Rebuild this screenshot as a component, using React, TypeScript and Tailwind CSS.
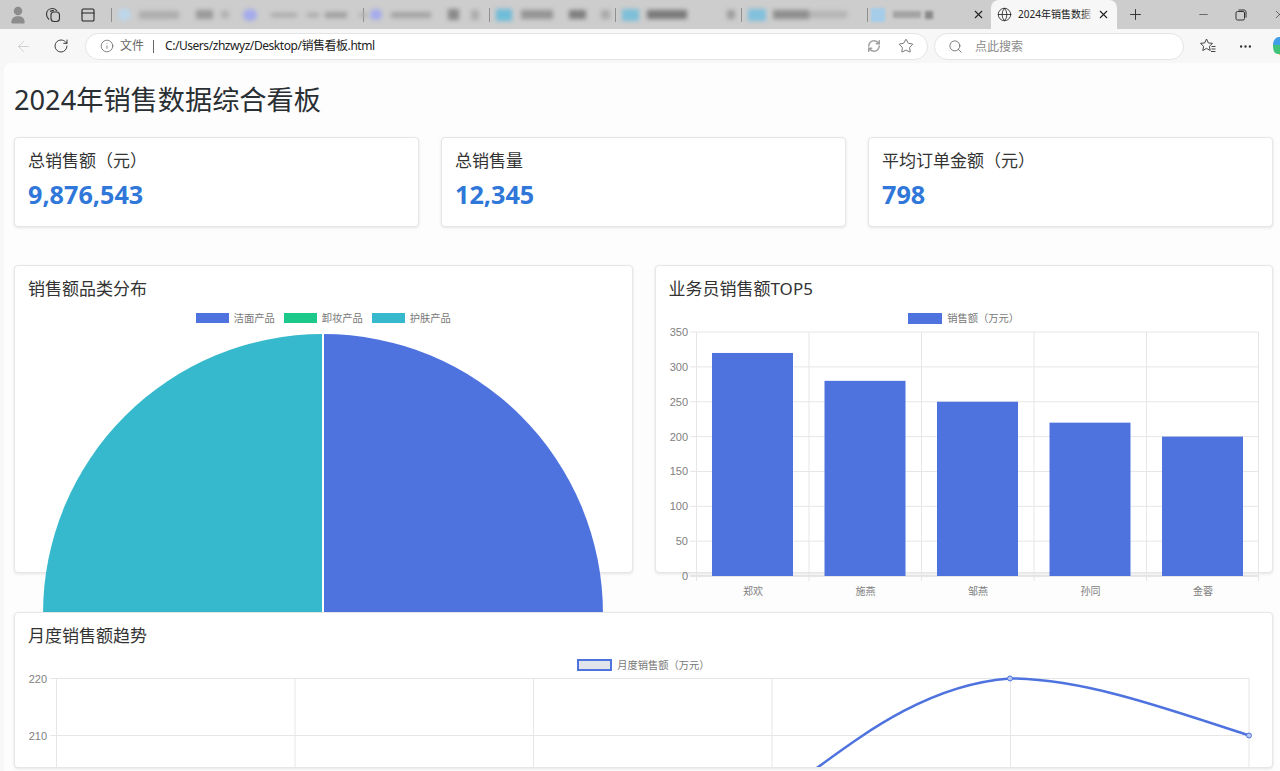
import { ArrowLeft, Globe, Info, Minus, MoreHorizontal, PanelTop, Plus, RefreshCw, RotateCw, Search, Star, X } from "lucide-react";

const tabs = [
  {
    fav: "w-[13px] h-[13px] rounded-full bg-[#bcd6ea]",
    blocks: ["ml-[8px] w-[40px] h-[8px] bg-[#aeaeae]", "ml-[17px] w-[17px] h-[9px] bg-[#9a9a9a]", "ml-[8px] w-[8px] h-[7px] bg-[#b0b0b0]"],
  },
  {
    fav: "w-[14px] h-[12px] rounded-full bg-[#a5abeb]",
    blocks: ["ml-[14px] w-[26px] h-[4px] bg-[#a8a8a8]", "ml-[10px] w-[12px] h-[4px] bg-[#a8a8a8]", "ml-[6px] w-[22px] h-[6px] bg-[#a0a0a0]", "ml-[12px] w-[8px] h-[4px] bg-[#b0b0b0]"],
  },
  {
    fav: "w-[12px] h-[11px] rounded-full bg-[#a5abeb]",
    blocks: ["ml-[9px] w-[40px] h-[6px] bg-[#a4a4a4]", "ml-[17px] w-[11px] h-[11px] bg-[#8a8a8a]", "ml-[12px] w-[8px] h-[10px] bg-[#adadad]"],
  },
  {
    fav: "w-[16px] h-[12px] bg-[#6fbcd8]",
    blocks: ["ml-[9px] w-[32px] h-[9px] bg-[#959595]", "ml-[16px] w-[17px] h-[9px] bg-[#7f7f7f]", "ml-[15px] w-[9px] h-[9px] bg-[#aaaaaa]"],
  },
  {
    fav: "w-[17px] h-[12px] bg-[#7dbfd8]",
    blocks: ["ml-[8px] w-[40px] h-[9px] bg-[#7a7a7a]", "ml-[40px] w-[8px] h-[9px] bg-[#9d9d9d]"],
  },
  {
    fav: "w-[18px] h-[12px] bg-[#80c0dc]",
    blocks: ["ml-[7px] w-[36px] h-[9px] bg-[#8e8e8e]", "w-[38px] h-[7px] bg-[#b4b4b4]"],
  },
];

const Favorites = () => (
  <svg width="18" height="18" viewBox="0 0 18 18" fill="none" stroke="#444" strokeWidth="1" strokeLinejoin="round">
    <path d="M7.500 2l1.800 3.900 4.200.5-3.100 2.900.8 4.200-3.700-2.100-3.700 2.100.8-4.200L1.500 6.400l4.200-.5z" />
    <path d="M12.500 9.500h4M12.500 12h4M12 14.500h4.500" />
  </svg>
);

const BrowserChrome = () => (
  <>
    <div className="flex h-[29px] items-stretch overflow-hidden bg-[#cdcdcd] text-[#333]">
      <div className="flex w-[36px] shrink-0 items-center justify-center">
        <svg width="16" height="19" viewBox="0 0 18 20" fill="#8c8c8c">
          <circle cx="9" cy="6" r="4.800" />
          <path d="M1.500 19c0-5 3-7 7.500-7s7.500 2 7.500 7c0 .6-.4 1-1 1h-13c-.6 0-1-.4-1-1z" />
        </svg>
      </div>
      <div className="flex w-[34px] shrink-0 items-center justify-center">
        <svg width="16" height="16" viewBox="0 0 16 16" fill="none" stroke="#333" strokeWidth="1.100">
          <rect x="6" y="5" width="8.500" height="9.500" rx="3" />
          <path d="M4 12.500C2.500 11 1.500 9.500 1.500 7.500 1.500 4 4 1.500 7.500 1.500c2 0 3.500 1 4.500 2.500" />
          <path d="M5 4.500C6 3.800 7.500 3.500 9 3.800" />
        </svg>
      </div>
      <div className="flex w-[36px] shrink-0 items-center justify-center">
        <PanelTop size={16} strokeWidth={1.600} className="text-[#222]" />
      </div>
      <div className="w-[5px] shrink-0" />
      {tabs.map((tab, i) => (
        <div key={i} className="flex w-[126px] shrink-0 items-center">
          <div className="h-[14px] w-px bg-[#8f8f8f]" />
          <div className="flex items-center pl-[6px] blur-[2px]">
            <div className={tab.fav} />
            {tab.blocks.map((b, j) => (
              <div key={j} className={b} />
            ))}
          </div>
        </div>
      ))}
      <div className="flex w-[124px] shrink-0 items-center">
        <div className="h-[14px] w-px bg-[#8f8f8f]" />
        <div className="ml-[3px] h-[14px] w-[14px] bg-[#a5cdea] blur-[1px]" />
        <div className="ml-[8px] h-[7px] w-[28px] bg-[#a3a3a3] blur-[1.500px]" />
        <div className="ml-[4px] h-[8px] w-[8px] bg-[#888] blur-[1.500px]" />
        <X size={13} strokeWidth={2} className="ml-[39px] text-[#222]" />
      </div>
      <div className="flex w-[126px] shrink-0 items-center rounded-t-lg bg-[#f7f7f7] pl-[6px]">
        <Globe size={15} strokeWidth={1.300} className="text-[#222]" />
        <div className="relative ml-[6px] w-[76px] whitespace-nowrap font-['Noto_Sans','Noto_Sans_CJK_SC',sans-serif] text-[10px] text-[#222]">
          2024年销售数据
          <div className="absolute inset-y-0 right-0 w-[12px] bg-gradient-to-r from-transparent to-[#f7f7f7]" />
        </div>
        <X size={13} strokeWidth={2} className="ml-[3px] text-[#222]" />
      </div>
      <div className="flex w-[36px] shrink-0 items-center justify-center">
        <Plus size={17} strokeWidth={1.400} className="text-[#333]" />
      </div>
      <div className="ml-[31px] flex w-[38px] shrink-0 items-center justify-center">
        <Minus size={13} strokeWidth={1.200} className="text-[#333]" />
      </div>
      <div className="flex w-[38px] shrink-0 items-center justify-center">
        <svg width="12" height="12" viewBox="0 0 12 12" fill="none" stroke="#333" strokeWidth="1">
          <rect x="1" y="2.500" width="8.500" height="8.500" rx="1.500" />
          <path d="M3.500 1h5.500c1.200 0 2 .8 2 2v5.500" />
        </svg>
      </div>
      <div className="flex w-[38px] shrink-0 items-center justify-center">
        <X size={13} strokeWidth={1.200} className="text-[#333]" />
      </div>
    </div>
    <div className="flex h-[34px] items-center bg-[#f7f7f7]">
      <div className="flex w-[46px] shrink-0 justify-center">
        <ArrowLeft size={17} strokeWidth={1.200} className="text-[#c9c9c9]" />
      </div>
      <div className="flex w-[30px] shrink-0 justify-center">
        <RotateCw size={16} strokeWidth={1.400} className="text-[#333]" />
      </div>
      <div className="ml-[9px] flex h-[27px] w-[843px] shrink-0 items-center rounded-full border border-[#e4e4e4] bg-white pl-[14px] font-['Noto_Sans','Noto_Sans_CJK_SC',sans-serif] text-[12px]">
        <Info size={14} strokeWidth={1.200} className="text-[#555]" />
        <span className="ml-[6px] text-[#666]">文件</span>
        <div className="ml-[9px] h-[13px] w-px bg-[#666]" />
        <span className="ml-[11px] tracking-[-0.45px] text-[#222]">C:/Users/zhzwyz/Desktop/销售看板.html</span>
        <div className="ml-auto mr-[13px] flex items-center gap-[17px]">
          <RefreshCw size={14} strokeWidth={2.600} className="text-[#a0a0a0]" />
          <Star size={16} strokeWidth={1.100} className="text-[#444]" />
        </div>
      </div>
      <div className="ml-[6px] flex h-[27px] w-[250px] shrink-0 items-center rounded-full border border-[#e4e4e4] bg-white pl-[13px] font-['Noto_Sans_CJK_SC',sans-serif] text-[12px] text-[#8a8a8a]">
        <Search size={15} strokeWidth={1.200} className="text-[#555]" />
        <span className="ml-[12px]">点此搜索</span>
      </div>
      <div className="ml-[15px] flex w-[18px] shrink-0 justify-center">
        <Favorites />
      </div>
      <div className="ml-[19px] flex w-[18px] shrink-0 justify-center">
        <MoreHorizontal size={15} strokeWidth={1.800} className="text-[#333]" />
      </div>
      <div className="ml-[17px] shrink-0">
        <svg width="18" height="20" viewBox="0 0 18 20">
          <path d="M2 9c0-5 3-8 6-8h6c3 0 4 4 3 8H2z" fill="#3f9fe8" />
          <path d="M2 9c0 5 1 9 5 9h3l3-5-3-4H2z" fill="#3fc27a" />
          <path d="M8 18c2 0 3-1 4-2l3-7h2c0 5-2 10-6 10H8z" fill="#f2b134" />
          <path d="M10 9h6l-3 6-3-3z" fill="#e4578c" />
        </svg>
      </div>
    </div>
  </>
);

const StatCard = ({ label, value }: { label: string; value: string }) => (
  <div className="h-[90px] rounded border border-[#e6e6e6] bg-white px-[13px] pt-[11px] shadow-[0_1px_3px_rgba(0,0,0,0.1)]">
    <div className="text-[17px] leading-[24px] text-[#333]">{label}</div>
    <div className="mt-[4px] text-[25.200px] font-bold leading-[34px] text-[#2f77d8]">{value}</div>
  </div>
);

const LegendItem = ({ swatch, label }: { swatch: string; label: string }) => (
  <div className="flex items-center gap-[5px]">
    <div className={swatch} />
    <span className="text-[10.250px] leading-[12px] text-[#777]">{label}</span>
  </div>
);

const PieChart = () => (
  <svg width="590" height="290" viewBox="28 326 590 290" className="shrink-0">
    <path d="M323 614 V334 A280 280 0 0 1 323 894 Z" fill="#4e73df" />
    <path d="M323 614 V894 A280 280 0 0 1 323 334 Z" fill="#36b9cc" />
    <line x1="323" x2="323" y1="334" y2="616" stroke="#fff" strokeWidth="2" />
  </svg>
);

const salesTicks = [350, 300, 250, 200, 150, 100, 50, 0];
const salesBars = [
  { name: "郑欢", value: 320 },
  { name: "施燕", value: 280 },
  { name: "邹燕", value: 250 },
  { name: "孙同", value: 220 },
  { name: "金蓉", value: 200 },
];
const salesGrid = [696.500, 809, 921.500, 1034, 1146.500, 1258.500];

const BarChart = () => (
  <svg width="589" height="280" viewBox="669 326 589 280" className="shrink-0 overflow-visible font-['Liberation_Sans','Noto_Sans_CJK_SC',sans-serif]">
    {salesTicks.map((t) => {
      const y = 576 - t * 0.697;
      return (
        <g key={t}>
          <line x1="690" x2="1258.500" y1={y} y2={y} stroke={t === 0 ? "#cfcfcf" : "#e6e6e6"} />
          <text x="688" y={y + 4} textAnchor="end" fontSize="11" fill="#808080">{t}</text>
        </g>
      );
    })}
    {salesGrid.map((x) => (
      <line key={x} x1={x} x2={x} y1="332" y2="581" stroke="#e6e6e6" />
    ))}
    {salesBars.map((b, i) => (
      <g key={b.name}>
        <rect x={712 + i * 112.500} y={576 - b.value * 0.697} width="81" height={b.value * 0.697} fill="#4e73df" />
        <text x={753 + i * 112.500} y="595" textAnchor="middle" fontSize="10" fill="#808080">{b.name}</text>
      </g>
    ))}
  </svg>
);

const lineGrid = [56.500, 295, 533.500, 772, 1010.500, 1249];

const LineChart = () => (
  <svg width="1230" height="110" viewBox="28 673 1230 110" className="shrink-0 overflow-visible font-['Liberation_Sans',sans-serif]">
    {[678.500, 735.500].map((y, i) => (
      <g key={y}>
        <line x1="50" x2="1249" y1={y} y2={y} stroke="#e6e6e6" />
        <text x="47" y={y + 4} textAnchor="end" fontSize="11" fill="#808080">{i === 0 ? 220 : 210}</text>
      </g>
    ))}
    {lineGrid.map((x) => (
      <line key={x} x1={x} x2={x} y1="678" y2="783" stroke="#e6e6e6" />
    ))}
    <path d="M800 780C850 745 920 685 1010 678.500C1080 678.500 1160 706 1249 735.500" fill="none" stroke="#4e73df" strokeWidth="2.500" />
    <circle cx="1010" cy="678.500" r="2.500" fill="#b9c6ef" stroke="#4e73df" />
    <circle cx="1249" cy="735.500" r="2.500" fill="#b9c6ef" stroke="#4e73df" />
  </svg>
);

export default function App() {
  return (
    <div className="h-[771px] w-[1280px] overflow-hidden bg-[#f7f7f7]">
      <BrowserChrome />
      <div className="ml-1 h-[708px] rounded-tl-lg bg-[#fdfdfd] pl-[10px] pr-[7px] font-['Noto_Sans','Noto_Sans_CJK_SC',sans-serif]">
        <h1 className="flex h-[74px] items-center text-[27.200px] font-normal text-[#2a2f33]">2024年销售数据综合看板</h1>
        <div className="grid grid-cols-3 gap-[22px]">
          <StatCard label="总销售额（元）" value="9,876,543" />
          <StatCard label="总销售量" value="12,345" />
          <StatCard label="平均订单金额（元）" value="798" />
        </div>
        <div className="mt-[38px] grid grid-cols-2 gap-[22px]">
          <div className="h-[308px] rounded border border-[#e6e6e6] bg-white px-[13px] pt-[11px] shadow-[0_1px_3px_rgba(0,0,0,0.1)]">
            <div className="text-[17px] leading-[24px] text-[#333]">销售额品类分布</div>
            <div className="mt-[11px] flex justify-center gap-[9px]">
              <LegendItem swatch="h-[10px] w-[33px] bg-[#4e73df]" label="洁面产品" />
              <LegendItem swatch="h-[10px] w-[33px] bg-[#1cc88a]" label="卸妆产品" />
              <LegendItem swatch="h-[10px] w-[33px] bg-[#36b9cc]" label="护肤产品" />
            </div>
            <div className="mt-[2px]">
              <PieChart />
            </div>
          </div>
          <div className="h-[308px] rounded border border-[#e6e6e6] bg-white px-[13px] pt-[11px] shadow-[0_1px_3px_rgba(0,0,0,0.1)]">
            <div className="text-[17px] leading-[24px] text-[#333]">业务员销售额TOP5</div>
            <div className="mt-[11px] flex justify-center">
              <LegendItem swatch="h-[11px] w-[34px] bg-[#4e73df]" label="销售额（万元）" />
            </div>
            <div className="mt-[2px]">
              <BarChart />
            </div>
          </div>
        </div>
        <div className="relative z-10 mt-[39px] h-[156px] overflow-hidden rounded border border-[#e6e6e6] bg-white px-[13px] pt-[11px] shadow-[0_1px_3px_rgba(0,0,0,0.1)]">
          <div className="text-[17px] leading-[24px] text-[#333]">月度销售额趋势</div>
          <div className="mt-[11px] flex justify-center">
            <LegendItem swatch="h-[12px] w-[35px] border-[2.500px] border-[#4e73df] bg-[#e2e4ec]" label="月度销售额（万元）" />
          </div>
          <div className="mt-[2px]">
            <LineChart />
          </div>
        </div>
      </div>
    </div>
  );
}
